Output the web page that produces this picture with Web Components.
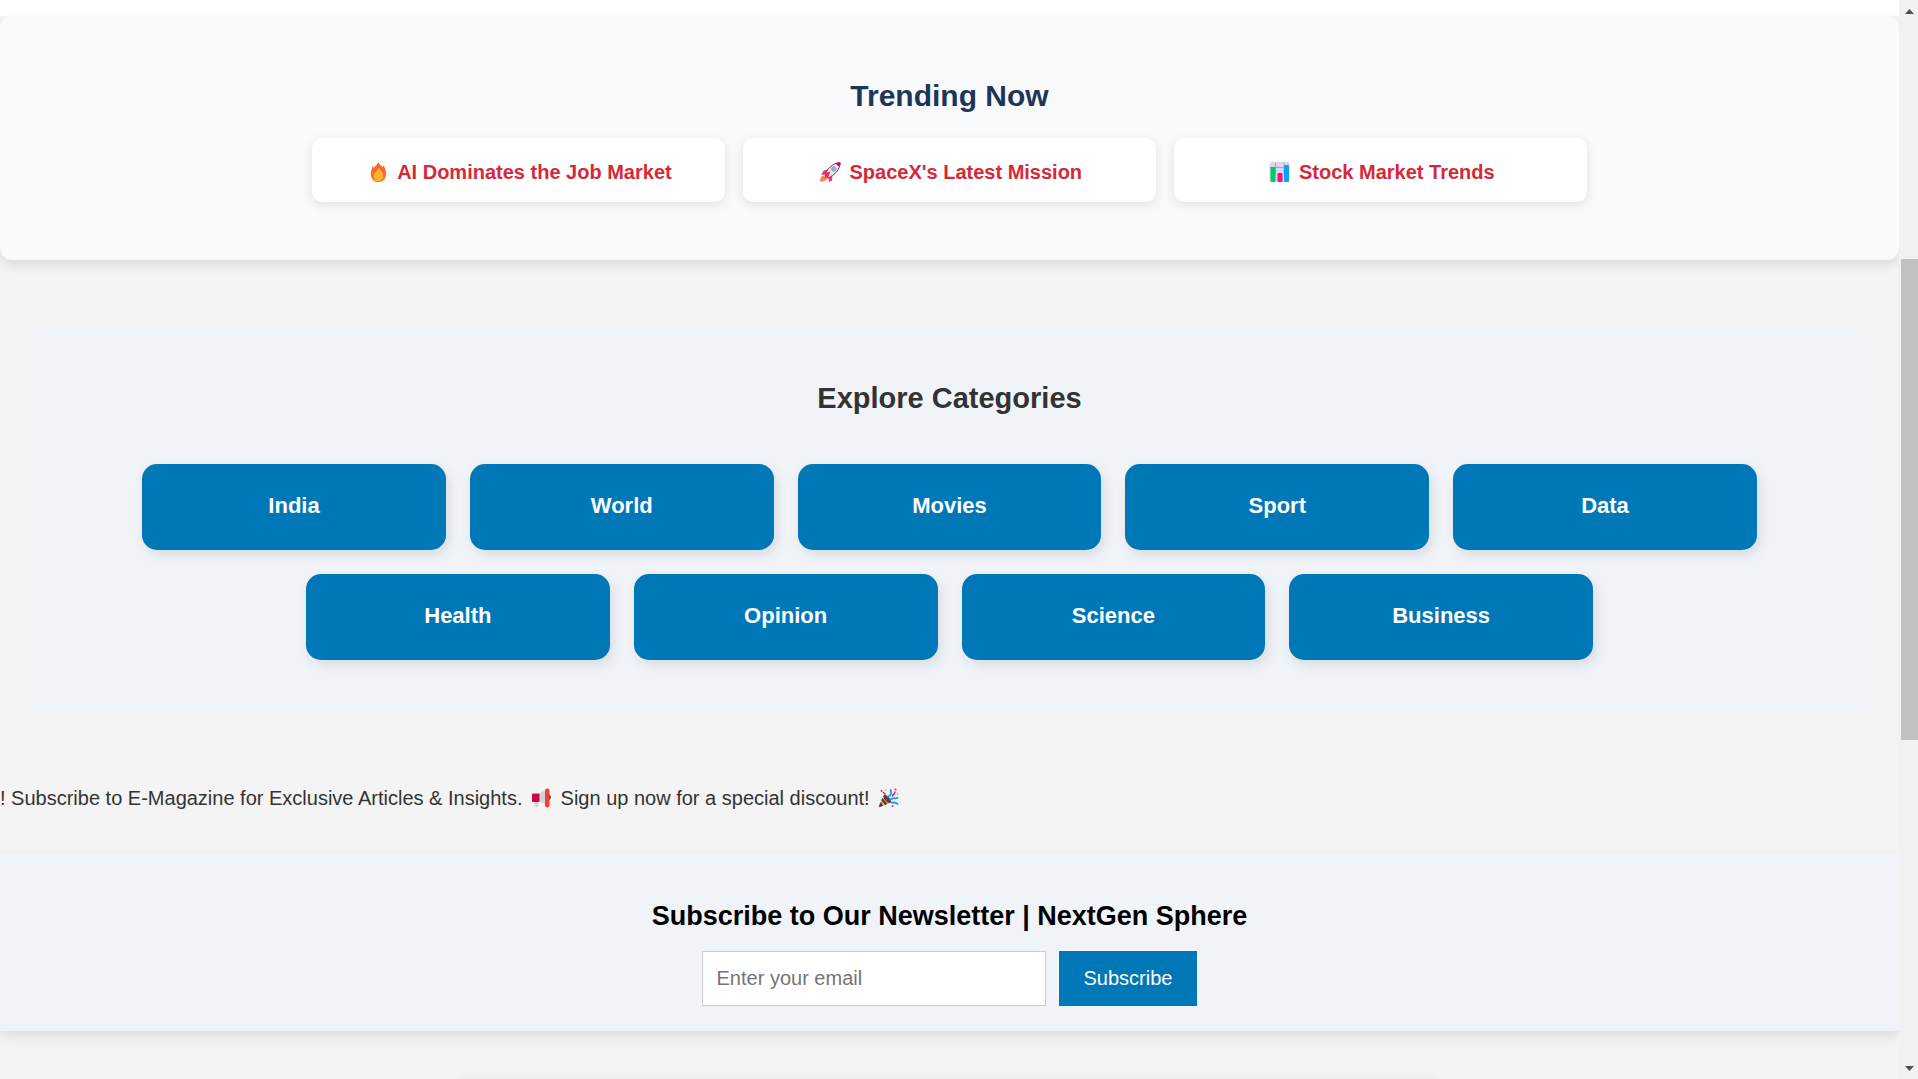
<!DOCTYPE html>
<html lang="en">
<head>
<meta charset="utf-8">
<title>NextGen Sphere</title>
<style>
  html, body { margin: 0; height: 100%; }
  body { font-family: "Liberation Sans", Arial, sans-serif; font-size: 20px; color: #333; background: #f4f4f4; overflow: hidden; }
</style>
</head>
<body>
<news-page>
  <trending-section>
    <trend-card icon="fire">AI Dominates the Job Market</trend-card>
    <trend-card icon="rocket">SpaceX's Latest Mission</trend-card>
    <trend-card icon="chart">Stock Market Trends</trend-card>
  </trending-section>
  <category-section>
    <category-tile>India</category-tile>
    <category-tile>World</category-tile>
    <category-tile>Movies</category-tile>
    <category-tile>Sport</category-tile>
    <category-tile>Data</category-tile>
    <category-tile>Health</category-tile>
    <category-tile>Opinion</category-tile>
    <category-tile>Science</category-tile>
    <category-tile>Business</category-tile>
  </category-section>
  <promo-ticker>! Subscribe to E-Magazine for Exclusive Articles &amp; Insights. <emoji-icon name="megaphone"></emoji-icon> Sign up now for a special discount! <emoji-icon name="party"></emoji-icon></promo-ticker>
  <newsletter-section></newsletter-section>
  <article-panel></article-panel>
</news-page>
<script>
const define = (name, html, setup) => {
  const template = document.createElement('template');
  template.innerHTML = html;
  customElements.define(name, class extends HTMLElement {
    constructor() {
      super();
      this.attachShadow({ mode: 'open' }).append(template.content.cloneNode(true));
    }
    connectedCallback() { if (setup) setup(this, this.shadowRoot); }
  });
};

const icons = {
  fire: `<path fill="#ff6a2b" d="M13 1c.7 2.500 3 3.500 4.200 5.200.4-.8.5-1.300.5-2 2 2.300 2.900 5 2.900 8.300 0 5-3.200 8.500-7.600 8.500s-7.700-3.400-7.700-8.300c0-3 1.200-5 1.700-7.700.5.500.9 1 1.200 1.700C9.700 4.900 12 3.700 13 1z"/><path fill="#ffb02e" d="M13.200 6.500c.5 1.800 4.600 4.400 4.600 8.600 0 3.200-2 5.200-4.800 5.200s-4.900-2-4.900-5c0-4.100 4.300-5.200 5.100-8.800z"/>`,
  rocket: `<path fill="#e23b6c" d="M10.500 8.200 6 9.800 3.600 14l4.800-.6zM15 14.500l-.6 5L11.800 21l-1.300-5z"/><path fill="#ff8259" d="M5.800 14.500 3.400 16 2.500 21l5.200-1.200 2.100-2z"/><path fill="#f3eef8" stroke="#b80f46" stroke-width="1" d="M7.500 14.400C9 8.500 14.500 2.400 22.400 1.400c.4 6.600-5 13-12.100 15.600z"/><path fill="#c7155a" d="M18 2.700c1.300-.7 3-1.200 5-1.300.1 1.700-.3 3.200-1 4.600z"/><circle cx="16.300" cy="8" r="2.300" fill="#83bdd7" stroke="#8a91a5" stroke-width=".8"/><path fill="#f02857" d="m8 12 5-1.500-2.200 5.800-3.600 1z"/>`,
  chart: `<rect x="3" y="1" width="20" height="20" rx="2" fill="#ddd5ed"/><path stroke="#aaa0c0" stroke-width=".9" d="M3.500 6.500h19M9 1.500V13M17.500 1.500V13"/><rect x="4" y="6" width="5" height="15" rx="1" fill="#00ca63"/><rect x="11" y="12" width="5" height="9" rx="1" fill="#f0127f"/><rect x="17.500" y="4" width="5" height="17" rx="1" fill="#0ca4e9"/>`,
  megaphone: `<path fill="#d3d3d3" d="M10 7 17 3v14l-7-3zM5.500 14h4.500v5.500H6.500z"/><rect x="3.500" y="6.500" width="7.500" height="8.500" rx="1" fill="#ca0b4a"/><path fill="#37313f" d="M20 7.500c3 .2 3 5.300 0 5.500z"/><rect x="16.500" y="1.500" width="4.500" height="19" rx="2.200" fill="#fa3b36"/>`,
  party: `<path fill="#f5b642" d="M8 9 3 19.300c-.2.900.4 1.300 1.200 1L15 15.500z"/><path fill="#4c3a51" d="m6.900 11 4.900 6-2.100.9-4-4.700zM5 15l2.700 3.500-3.200 1.600-1.100-.6z"/><ellipse cx="11.700" cy="12" rx="2.400" ry="5" transform="rotate(-42 11.700 12)" fill="#6a3b3d"/><path fill="none" stroke="#1599e6" stroke-width="1.800" stroke-linecap="round" d="M12.500 9.500c3-.8 4-3.500 2.500-6.500M15 12.500c2.200-2 4.200-.2 7-1.800M16 15.500c2 .3 4-.8 6 1.500"/><path fill="none" stroke="#d31d87" stroke-width="1.500" stroke-linecap="round" d="M17 9c.4-2.700 2-.8 2.500-4M8 5.500l1.500 1.500"/><g fill="#ed278d"><circle cx="6" cy="4" r="1"/><circle cx="20" cy="2.500" r="1.100"/><circle cx="17" cy="19" r="1"/></g><g fill="#f4b32d"><circle cx="10.500" cy="3" r=".9"/><circle cx="22" cy="7" r="1"/></g>`
};

define('emoji-icon', `<style>
  :host { display: inline-block; width: 27px; height: 22px; vertical-align: -4px; }
  svg { display: block; width: 100%; height: 100%; }
</style><svg viewBox="0 0 26 22" aria-hidden="true"></svg>`,
  (el, root) => { root.querySelector('svg').innerHTML = icons[el.getAttribute('name')] || ''; });

define('trend-card', `<style>
  :host { flex: 1; display: block; background: #fff; border-radius: 10px; box-shadow: 0 3px 12px rgba(0,0,0,.1); }
  a { display: block; padding: 23px 18px 19px; line-height: 22px; text-align: center; font-weight: bold; color: #d62839; text-decoration: none; }
</style><a href="#"><emoji-icon></emoji-icon> <slot></slot></a>`,
  (el, root) => {
    const icon = document.createElement('emoji-icon');
    icon.setAttribute('name', el.getAttribute('icon'));
    root.querySelector('emoji-icon').replaceWith(icon);
  });

define('trending-section', `<style>
  :host { display: block; background: #f8fafc; border-radius: 12px; padding: 63px 24px 58px; box-shadow: 0 5px 12px rgba(0,0,0,.1); }
  h2 { margin: 0 0 25px; font-size: 30px; line-height: 34px; text-align: center; color: #1d3557; }
  div { display: flex; gap: 18px; max-width: 1275px; margin: 0 auto; }
</style><h2>Trending Now</h2><div><slot></slot></div>`);

define('category-tile', `<style>
  :host { display: block; width: 16.500%; }
  a { display: block; padding: 30px 12px 32px; line-height: 24px; border-radius: 15px; background: #0077b6; box-shadow: 3px 5px 12px rgba(0,0,0,.1); color: #fff; font-size: 22px; font-weight: bold; text-align: center; text-decoration: none; }
</style><a href="#"><slot></slot></a>`);

define('category-section', `<style>
  :host { display: block; margin: 68px 29px 0; padding: 53px 0 54px; border-radius: 18px; background: #f0f4f9; }
  h2 { margin: 0 0 49px; font-size: 29px; line-height: 34px; text-align: center; color: #333; }
  div { display: flex; flex-wrap: wrap; justify-content: center; gap: 24px; }
</style><h2>Explore Categories</h2><div><slot></slot></div>`);

define('promo-ticker', `<style>
  :host { display: block; margin: 72px 0 43px; line-height: 24px; white-space: nowrap; overflow: hidden; }
</style><slot></slot>`);

define('newsletter-section', `<style>
  :host { display: block; padding: 46px 24px 25px; background: #f0f4f9; box-shadow: 0 5px 12px rgba(0,0,0,.1); }
  h2 { margin: 0 0 18px; font-size: 27px; line-height: 34px; text-align: center; color: #000; }
  form { display: flex; justify-content: center; gap: 13px; }
  input, button { box-sizing: border-box; height: 55px; margin: 0; border-radius: 0; font: inherit; }
  input { width: 344px; padding: 0 14px; border: 1px solid #ccc; background: #fff; color: #333; }
  input::placeholder { color: #757575; }
  button { padding: 0 25px; border: 0; background: #0077b6; color: #fff; }
</style><h2>Subscribe to Our Newsletter | NextGen Sphere</h2>
<form><input type="email" placeholder="Enter your email" aria-label="Email address"><button type="button">Subscribe</button></form>`);

define('article-panel', `<style>
  :host { display: block; max-width: 980px; min-height: 300px; margin: 50px auto 0; background: #fff; border-radius: 12px; box-shadow: 0 5px 18px rgba(0,0,0,.15); }
</style>`);

define('page-scrollbar', `<style>
  :host { display: flex; flex-direction: column; width: 17px; padding-left: 2px; background: #f1f1f1; }
  svg { display: block; width: 17px; height: 21px; fill: #505050; }
  .track { flex: 1; display: grid; grid-template-rows: 238fr 481fr 318fr; }
  .thumb { grid-row: 2; background: #c1c1c1; }
</style>
<svg viewBox="0 0 17 21" aria-hidden="true"><path d="M4 14h9L8.500 9z"/></svg>
<div class="track"><div class="thumb"></div></div>
<svg viewBox="0 0 17 21" aria-hidden="true"><path d="M4 8h9l-4.500 5z"/></svg>`);

define('news-page', `<style>
  :host { display: flex; height: 100vh; overflow: hidden; }
  main { flex: 1; min-width: 0; overflow: hidden; }
  .hero-end { height: 16px; background: #fff; }
</style><main><div class="hero-end"></div><slot></slot></main><page-scrollbar></page-scrollbar>`);
</script>
</body>
</html>
